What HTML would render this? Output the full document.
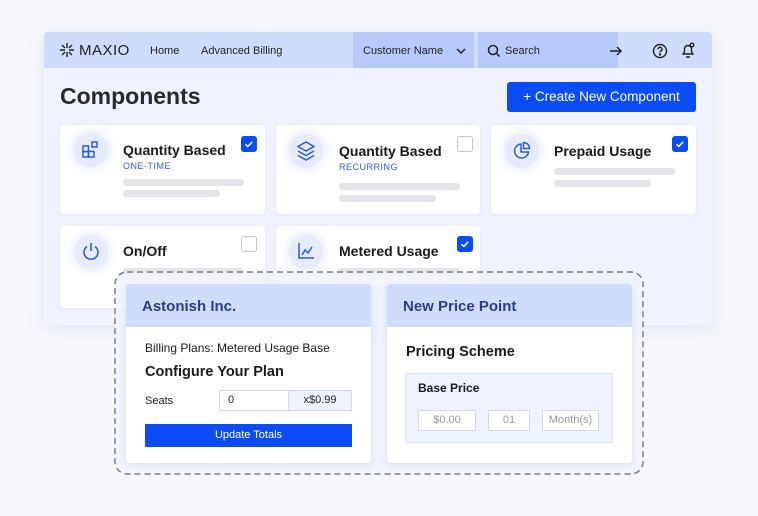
<!DOCTYPE html><html><head><meta charset="utf-8"><style>
*{box-sizing:border-box;margin:0;padding:0}
body{width:758px;height:516px;background:#f7f8fc;font-family:"Liberation Sans",sans-serif;position:relative;overflow:hidden;color:#1a1a1a}
.abs{position:absolute}
.app{left:44px;top:32px;width:668px;height:293px;background:#f0f3fd;border-radius:4px;box-shadow:0 4px 18px rgba(60,80,160,.12);overflow:hidden}
.nav{left:0;top:0;width:668px;height:36px;background:#d0dcfb}
.nav span{position:absolute;font-size:11px;top:13px;color:#222}
.card{background:#fff;border-radius:4px;box-shadow:0 1px 4px rgba(60,80,160,.08)}
.ic{width:34px;height:34px;border-radius:50%;background:#e6ecfd;box-shadow:0 0 8px 4px #eef2fe}
.ttl{font-size:14px;font-weight:bold;color:#1a1a1a}
.sub{font-size:9px;color:#2b5be6;letter-spacing:.5px}
.bar{height:7px;border-radius:4px;background:#e4e5e8}
.cb{width:16px;height:16px;border-radius:3px}
.cbon{background:#0b4cf5}
.cboff{border:1.5px solid #c8c8cc;background:#fff}
.inp{border:1px solid #d4d8e0;background:#fff;font-size:11px;color:#999;text-align:center;line-height:19px;height:21px}
</style></head><body>
<div class="abs app">
 <div class="abs nav">
  <svg class="abs" style="left:15px;top:10px" width="16" height="16" viewBox="0 0 16 16" stroke="#222" stroke-width="1.4" fill="none"><path d="M8 1v5M8 10v5M1 8h5M10 8h5M3 3l3 3M10 10l3 3M13 3l-3 3M6 10l-3 3"/></svg>
  <span style="left:35px;top:10px;font-size:15px;letter-spacing:.5px">MAXIO</span>
  <span style="left:106px">Home</span>
  <span style="left:157px">Advanced Billing</span>
  <div class="abs" style="left:309px;top:0;width:121px;height:36px;background:#b8cafa"></div>
  <span style="left:319px">Customer Name</span>
  <svg class="abs" style="left:411px;top:14px" width="12" height="10" viewBox="0 0 12 10" fill="none" stroke="#222" stroke-width="1.5"><path d="M2 3l4 4 4-4"/></svg>
  <div class="abs" style="left:434px;top:0;width:140px;height:36px;background:#b8cafa"></div>
  <svg class="abs" style="left:443px;top:12px" width="14" height="14" viewBox="0 0 14 14" fill="none" stroke="#222" stroke-width="1.5"><circle cx="6" cy="6" r="4.5"/><path d="M9.5 9.5l3 3"/></svg>
  <span style="left:461px">Search</span>
  <svg class="abs" style="left:565px;top:12px" width="14" height="14" viewBox="0 0 14 14" fill="none" stroke="#222" stroke-width="1.5"><path d="M1 7h11M8 3l4 4-4 4"/></svg>
  <svg class="abs" style="left:608px;top:11px" width="16" height="16" viewBox="0 0 16 16" fill="none" stroke="#222" stroke-width="1.4"><circle cx="8" cy="8" r="6.5"/><path d="M6 6.3a2 2 0 1 1 2.5 1.9c-.5.2-.5.6-.5 1.3"/><circle cx="8" cy="11.5" r=".5" fill="#222"/></svg>
  <svg class="abs" style="left:636px;top:10px" width="16" height="17" viewBox="0 0 16 17" fill="none" stroke="#222" stroke-width="1.4"><path d="M3 12h10l-1.5-2V7a3.5 3.5 0 0 0-7 0v3z M6.5 14a1.5 1.5 0 0 0 3 0"/><circle cx="12" cy="3" r="1.8"/></svg>
 </div>
 <div class="abs" style="left:16px;top:51px;font-size:23px;font-weight:bold;color:#2a2a2a">Components</div>
 <div class="abs" style="left:463px;top:50px;width:189px;height:30px;background:#0b4cf5;border-radius:3px;color:#fff;font-size:13.5px;text-align:center;line-height:30px">+ Create New Component</div>
</div>

<div class="abs card" style="left:60px;top:125px;width:205px;height:89px"></div>
<div class="abs ic" style="left:74px;top:133px"></div>
<svg class="abs" style="left:81px;top:140px" width="20" height="20" viewBox="0 0 20 20" fill="none" stroke="#2b5be6" stroke-width="1.5"><rect x="2" y="6" width="5.5" height="5.5"/><rect x="2" y="11.5" width="5.5" height="5.5"/><rect x="7.5" y="11.5" width="5.5" height="5.5"/><rect x="11" y="2" width="5" height="5"/></svg>
<div class="abs ttl" style="left:123px;top:142px">Quantity Based</div>
<div class="abs sub" style="left:123px;top:161px">ONE-TIME</div>
<div class="abs bar" style="left:123px;top:179px;width:121px"></div>
<div class="abs bar" style="left:123px;top:190px;width:97px"></div>
<svg class="abs cb cbon" style="left:241px;top:136px" viewBox="0 0 16 16" fill="none" stroke="#fff" stroke-width="1.5"><path d="M4.5 8.2l2.3 2.2 4.5-4.5"/></svg>

<div class="abs card" style="left:276px;top:125px;width:204px;height:89px"></div>
<div class="abs ic" style="left:289px;top:134px"></div>
<svg class="abs" style="left:296px;top:140px" width="20" height="22" viewBox="0 0 20 22" fill="none" stroke="#2b5be6" stroke-width="1.5"><path d="M10 2l8 4.5-8 4.5-8-4.5z M2 11l8 4.5 8-4.5 M2 15.5l8 4.5 8-4.5"/></svg>
<div class="abs ttl" style="left:339px;top:143px">Quantity Based</div>
<div class="abs sub" style="left:339px;top:162px">RECURRING</div>
<div class="abs bar" style="left:339px;top:183px;width:121px"></div>
<div class="abs bar" style="left:339px;top:195px;width:97px"></div>
<div class="abs cb cboff" style="left:457px;top:136px"></div>

<div class="abs card" style="left:491px;top:125px;width:205px;height:89px"></div>
<div class="abs ic" style="left:505px;top:134px"></div>
<svg class="abs" style="left:512px;top:141px" width="20" height="20" viewBox="0 0 20 20" fill="none" stroke="#2b5be6" stroke-width="1.5"><path d="M9 3a7 7 0 1 0 7.5 8H9z M11.5 1.5a6 6 0 0 1 6 6h-6z"/></svg>
<div class="abs ttl" style="left:554px;top:143px">Prepaid Usage</div>
<div class="abs bar" style="left:554px;top:168px;width:121px"></div>
<div class="abs bar" style="left:554px;top:180px;width:97px"></div>
<svg class="abs cb cbon" style="left:672px;top:136px" viewBox="0 0 16 16" fill="none" stroke="#fff" stroke-width="1.5"><path d="M4.5 8.2l2.3 2.2 4.5-4.5"/></svg>

<div class="abs card" style="left:60px;top:226px;width:205px;height:82px"></div>
<div class="abs ic" style="left:74px;top:235px"></div>
<svg class="abs" style="left:81px;top:241px" width="20" height="22" viewBox="0 0 20 22" fill="none" stroke="#2b5be6" stroke-width="1.6"><path d="M10 2v8 M6 5.5a7 7 0 1 0 8 0"/></svg>
<div class="abs ttl" style="left:123px;top:243px">On/Off</div>
<div class="abs bar" style="left:123px;top:268px;width:121px"></div>
<div class="abs cb cboff" style="left:241px;top:236px"></div>

<div class="abs card" style="left:276px;top:226px;width:204px;height:60px"></div>
<div class="abs ic" style="left:289px;top:235px"></div>
<svg class="abs" style="left:296px;top:241px" width="20" height="20" viewBox="0 0 20 20" fill="none" stroke="#2b5be6" stroke-width="1.5"><path d="M3 2v15h15 M6 14l3-5 3 3 4-6"/></svg>
<div class="abs ttl" style="left:339px;top:243px">Metered Usage</div>
<div class="abs bar" style="left:339px;top:268px;width:121px"></div>
<svg class="abs cb cbon" style="left:457px;top:236px" viewBox="0 0 16 16" fill="none" stroke="#fff" stroke-width="1.5"><path d="M4.5 8.2l2.3 2.2 4.5-4.5"/></svg>

<div class="abs" style="left:115px;top:272px;width:528px;height:202px;border-radius:12px;background:rgba(240,243,253,.75)"></div>
<svg class="abs" style="left:114px;top:271px" width="530" height="204"><rect x="1" y="1" width="528" height="202" rx="12" fill="none" stroke="#808080" stroke-width="1.5" stroke-dasharray="6 4"/></svg>
<div class="abs card" style="left:126px;top:284px;width:245px;height:179px;box-shadow:0 2px 8px rgba(60,80,160,.12);overflow:hidden">
 <div style="height:43px;background:#d0dcfb;padding:14px 0 0 16px;font-size:15px;font-weight:bold;color:#2a3e8c">Astonish Inc.</div>
 <div class="abs" style="left:19px;top:57px;font-size:12px">Billing Plans: Metered Usage Base</div>
 <div class="abs" style="left:19px;top:80px;font-size:14.5px;font-weight:bold">Configure Your Plan</div>
 <div class="abs" style="left:19px;top:111px;font-size:11px">Seats</div>
 <div class="abs inp" style="left:93px;top:106px;width:70px;text-align:left;padding-left:8px;color:#222">0</div>
 <div class="abs inp" style="left:162px;top:106px;width:64px;background:#eef2fb;color:#222">x$0.99</div>
 <div class="abs" style="left:19px;top:140px;width:207px;height:23px;background:#0b4cf5;color:#fff;font-size:11px;text-align:center;line-height:23px">Update Totals</div>
</div>
<div class="abs card" style="left:387px;top:284px;width:245px;height:179px;box-shadow:0 2px 8px rgba(60,80,160,.12);overflow:hidden">
 <div style="height:43px;background:#d0dcfb;padding:14px 0 0 16px;font-size:15px;font-weight:bold;color:#2a3e8c">New Price Point</div>
 <div class="abs" style="left:19px;top:60px;font-size:14.5px;font-weight:bold">Pricing Scheme</div>
 <div class="abs" style="left:18px;top:89px;width:208px;height:70px;background:#eef2fd;border:1px solid #d8e0f5;border-radius:2px"></div>
 <div class="abs" style="left:31px;top:97px;font-size:12px;font-weight:bold">Base Price</div>
 <div class="abs inp" style="left:31px;top:126px;width:58px">$0.00</div>
 <div class="abs inp" style="left:101px;top:126px;width:42px">01</div>
 <div class="abs inp" style="left:155px;top:126px;width:57px">Month(s)</div>
</div>
</body></html>
